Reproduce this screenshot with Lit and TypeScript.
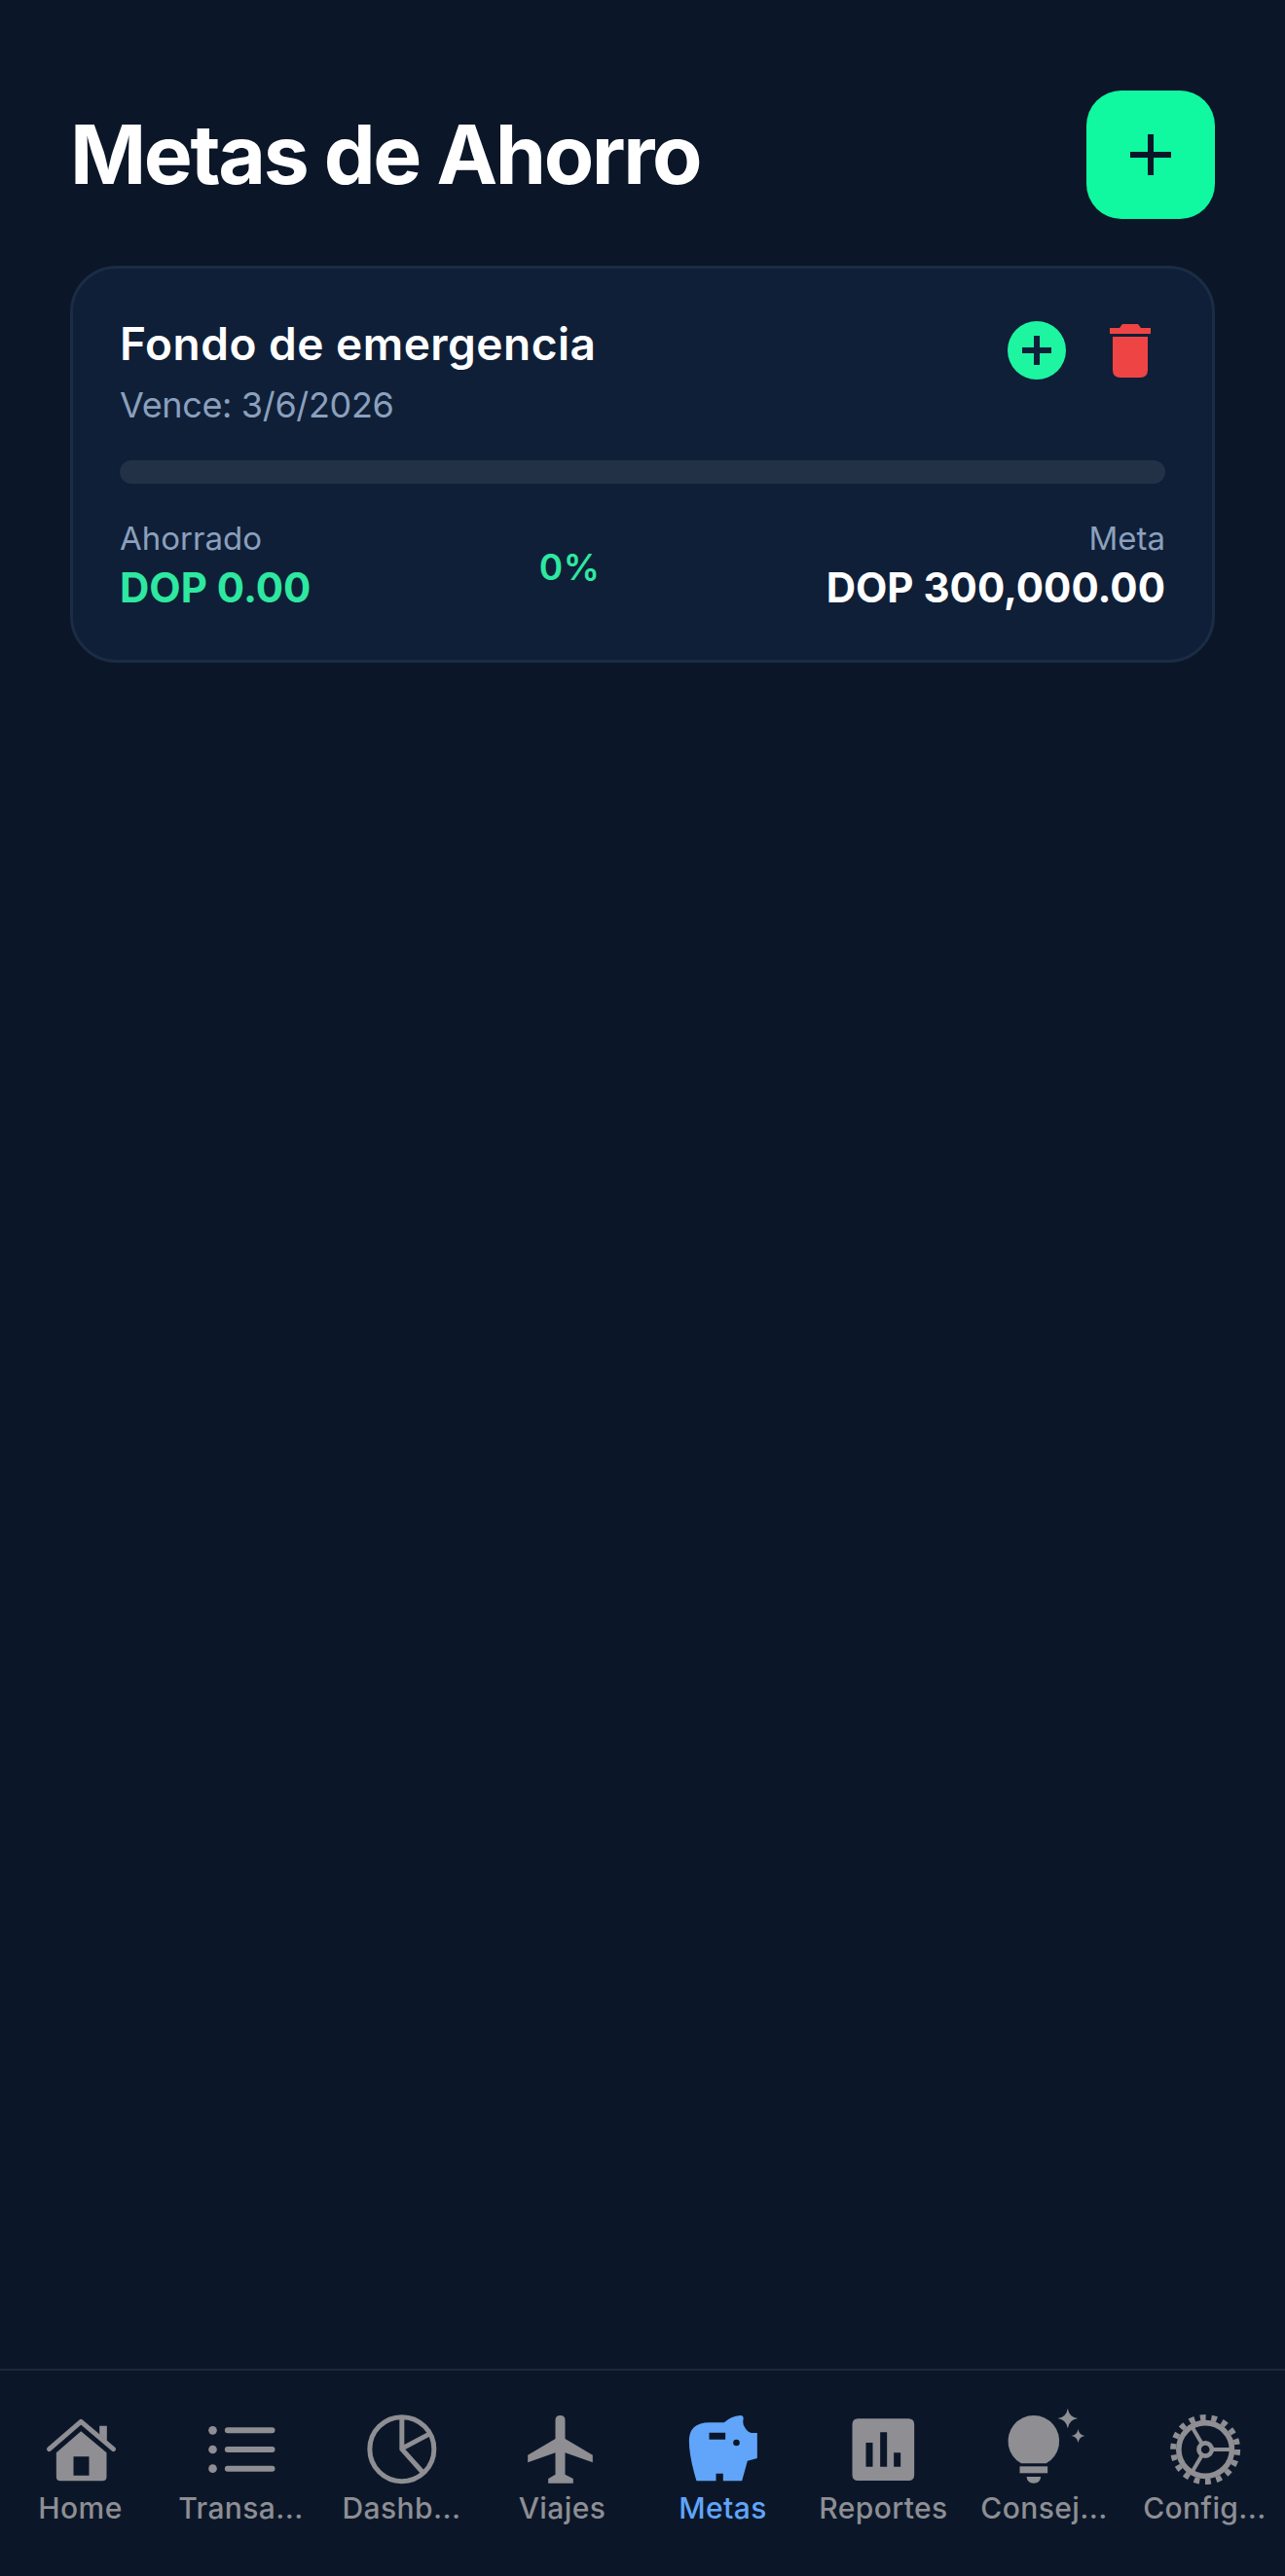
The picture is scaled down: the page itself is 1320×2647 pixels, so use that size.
import { LitElement, html, svg, css } from "lit";
import { customElement } from "lit/decorators.js";

// icon paths are traced in 3x crop units, hence the 216 wide viewBoxes
const homeIcon = svg`
  <path fill="currentColor" d="M305 215h23v47l-23-20z" />
  <path fill="none" stroke="currentColor" stroke-width="15" stroke-linecap="round" stroke-linejoin="round" d="M150 287L248 202L348 287" />
  <path fill="currentColor" fill-rule="evenodd" d="M248 232L327 298V372Q327 385 314 385H185Q172 385 172 372V298ZM225 310V368H273V310Z" />
`;

const listIcon = svg`
  <g fill="currentColor">
    <circle cx="654" cy="229" r="13" />
    <circle cx="654" cy="288" r="13" />
    <circle cx="654" cy="347" r="13" />
  </g>
  <path fill="none" stroke="currentColor" stroke-width="18" stroke-linecap="round" d="M700 229H837M700 288H837M700 347H837" />
`;

const pieIcon = svg`
  <g fill="none" stroke="currentColor" stroke-width="15">
    <circle cx="247" cy="287" r="99" />
    <path stroke-linejoin="round" d="M247 192V287L310 357M251 283L330 241" />
  </g>
`;

const planeIcon = svg`
  <path fill="currentColor" d="M720 198Q720 183 735 183T750 198V255L835 305V328L750 298V365L775 378V392H698V378L720 365V298L635 328V305L720 255Z" />
`;

const pigIcon = svg`
  <path fill="currentColor" fill-rule="evenodd" d="M165 385Q142 310 142 262Q142 205 205 205H250Q270 186 300 183Q312 184 309 196Q306 210 315 222Q322 234 334 237H352V315L322 323L305 385H247V362H225V385ZM204 236V257H254V236ZM288 257A10 10 0 1 0 288 277A10 10 0 1 0 288 257Z" />
`;

const reportIcon = svg`
  <path fill="currentColor" fill-rule="evenodd" d="M663 193H818Q836 193 836 211V366Q836 384 818 384H663Q645 384 645 366V211Q645 193 663 193ZM687 267V341H708V267ZM731 235V341H752V235ZM773 298V341H794V298Z" />
`;

const bulbIcon = svg`
  <g fill="currentColor">
    <path d="M205.500 331A79 79 0 1 1 282.500 331Z" />
    <rect x="201" y="340" width="86" height="21" />
    <path d="M222 372H266Q264 392 244 392T222 372Z" />
    <path d="M349 161Q353 188 380 192Q353 196 349 223Q345 196 318 192Q345 188 349 161Z" />
    <path d="M381 225Q384 243 402 246Q384 249 381 267Q378 249 360 246Q378 243 381 225Z" />
  </g>
`;

const gearIcon = svg`
  <g fill="none" stroke="currentColor">
    <circle cx="773" cy="288" r="82" stroke-width="17" />
    <circle cx="773" cy="288" r="99" stroke-width="18" stroke-dasharray="17.300 17.300" />
    <circle cx="773" cy="288" r="20" stroke-width="14" />
    <path stroke-width="12" d="M793 288H860M763 271L731 217M763 305L731 359" />
  </g>
`;

const tabs = [
  { label: "Home", box: "139.500 180 216 216", icon: homeIcon },
  { label: "Transa...", box: "634.500 180 216 216", icon: listIcon },
  { label: "Dashb...", box: "139.500 180 216 216", icon: pieIcon },
  { label: "Viajes", box: "634.500 180 216 216", icon: planeIcon },
  { label: "Metas", box: "139.500 180 216 216", icon: pigIcon, active: true },
  { label: "Reportes", box: "634.500 180 216 216", icon: reportIcon },
  { label: "Consej...", box: "169.500 180 216 216", icon: bulbIcon },
  { label: "Config...", box: "664.500 180 216 216", icon: gearIcon },
];

@customElement("app-root")
export class AppRoot extends LitElement {
  static styles = css`
    :host {
      display: block;
      font-family: Inter, "Liberation Sans", sans-serif;
      background: #0b1729;
      color: #fff;
    }
    .page {
      height: 2647px;
      display: flex;
      flex-direction: column;
    }
    .content {
      flex: 1;
      padding: 93px 72px 0;
    }
    .header {
      display: flex;
      justify-content: space-between;
      align-items: center;
      margin-bottom: 48px;
    }
    h1 {
      margin: 0;
      font-size: 84px;
      line-height: 100px;
      font-weight: 700;
      letter-spacing: -2.4px;
    }
    .add {
      width: 132px;
      height: 132px;
      border-radius: 36px;
      background: #10f9a0;
      display: flex;
      align-items: center;
      justify-content: center;
    }
    .add svg {
      width: 42px;
      height: 42px;
    }
    .card {
      background: #0f1f38;
      border: 3px solid #1b2c44;
      border-radius: 48px;
      padding: 48px 48px 50px;
    }
    .top {
      display: flex;
      justify-content: space-between;
      align-items: flex-start;
    }
    .name {
      margin-top: 2px;
      font-size: 46px;
      line-height: 54px;
      font-weight: 600;
      letter-spacing: 0.5px;
    }
    .due {
      margin-top: 15px;
      font-size: 36px;
      line-height: 42px;
      color: #8ba0bd;
      letter-spacing: -0.35px;
    }
    .actions {
      display: flex;
      gap: 24px;
    }
    .act {
      width: 72px;
      height: 72px;
      display: flex;
      align-items: center;
      justify-content: center;
    }
    .dot {
      width: 60px;
      height: 60px;
      border-radius: 50%;
      background: #1ef5a0;
      display: flex;
      align-items: center;
      justify-content: center;
    }
    .dot svg {
      width: 30px;
      height: 30px;
    }
    .trash {
      width: 42px;
      height: 55px;
      fill: #ef4444;
    }
    .track {
      margin-top: 36px;
      height: 24px;
      border-radius: 12px;
      background: #223146;
    }
    .stats {
      margin-top: 38px;
      display: flex;
      justify-content: space-between;
      align-items: center;
    }
    .right {
      text-align: right;
    }
    .label {
      font-size: 33px;
      line-height: 36px;
      color: #8ba0bd;
    }
    .value {
      margin-top: 9px;
      font-size: 42px;
      line-height: 48px;
      font-weight: 700;
    }
    .green {
      color: #2ee8a0;
    }
    .pct {
      margin-top: 3px;
      padding-left: 2px;
      font-size: 37px;
      line-height: 42px;
      font-weight: 600;
      letter-spacing: 0.5px;
      color: #2ee8a0;
    }
    .tabbar {
      height: 213px;
      box-sizing: border-box;
      border-top: 2px solid #1c2a3c;
      padding-top: 45px;
      display: grid;
      grid-template-columns: repeat(8, 1fr);
    }
    .tab {
      display: flex;
      flex-direction: column;
      align-items: center;
      color: #8e8e93;
    }
    .tab.active {
      color: #60a5fa;
    }
    .tab svg {
      width: 72px;
      height: 72px;
      overflow: visible;
    }
    .tab span {
      margin-top: 6px;
      font-size: 30px;
      line-height: 36px;
      font-weight: 500;
      letter-spacing: 0.4px;
      white-space: nowrap;
    }
  `;

  render() {
    return html`
      <div class="page">
        <div class="content">
          <div class="header">
            <h1>Metas de Ahorro</h1>
            <div class="add">
              <svg viewBox="0 0 42 42"><path d="M21 0V42M0 21H42" stroke="#0a1628" stroke-width="6" /></svg>
            </div>
          </div>
          <div class="card">
            <div class="top">
              <div>
                <div class="name">Fondo de emergencia</div>
                <div class="due">Vence: 3/6/2026</div>
              </div>
              <div class="actions">
                <div class="act">
                  <div class="dot">
                    <svg viewBox="0 0 30 30"><path d="M15 0V30M0 15H30" stroke="#0f1f38" stroke-width="6" /></svg>
                  </div>
                </div>
                <div class="act">
                  <svg class="trash" viewBox="0 0 42 55">
                    <path d="M0 4H10L13 0H29L32 4H42V10H0Z" />
                    <path d="M3 13H39V47Q39 55 31 55H11Q3 55 3 47Z" />
                  </svg>
                </div>
              </div>
            </div>
            <div class="track"></div>
            <div class="stats">
              <div>
                <div class="label">Ahorrado</div>
                <div class="value green">DOP 0.00</div>
              </div>
              <div class="pct">0%</div>
              <div class="right">
                <div class="label">Meta</div>
                <div class="value">DOP 300,000.00</div>
              </div>
            </div>
          </div>
        </div>
        <div class="tabbar">
          ${tabs.map(
            (t) => html`
              <div class="tab ${t.active ? "active" : ""}">
                <svg viewBox=${t.box}>${t.icon}</svg>
                <span>${t.label}</span>
              </div>
            `
          )}
        </div>
      </div>
    `;
  }
}
